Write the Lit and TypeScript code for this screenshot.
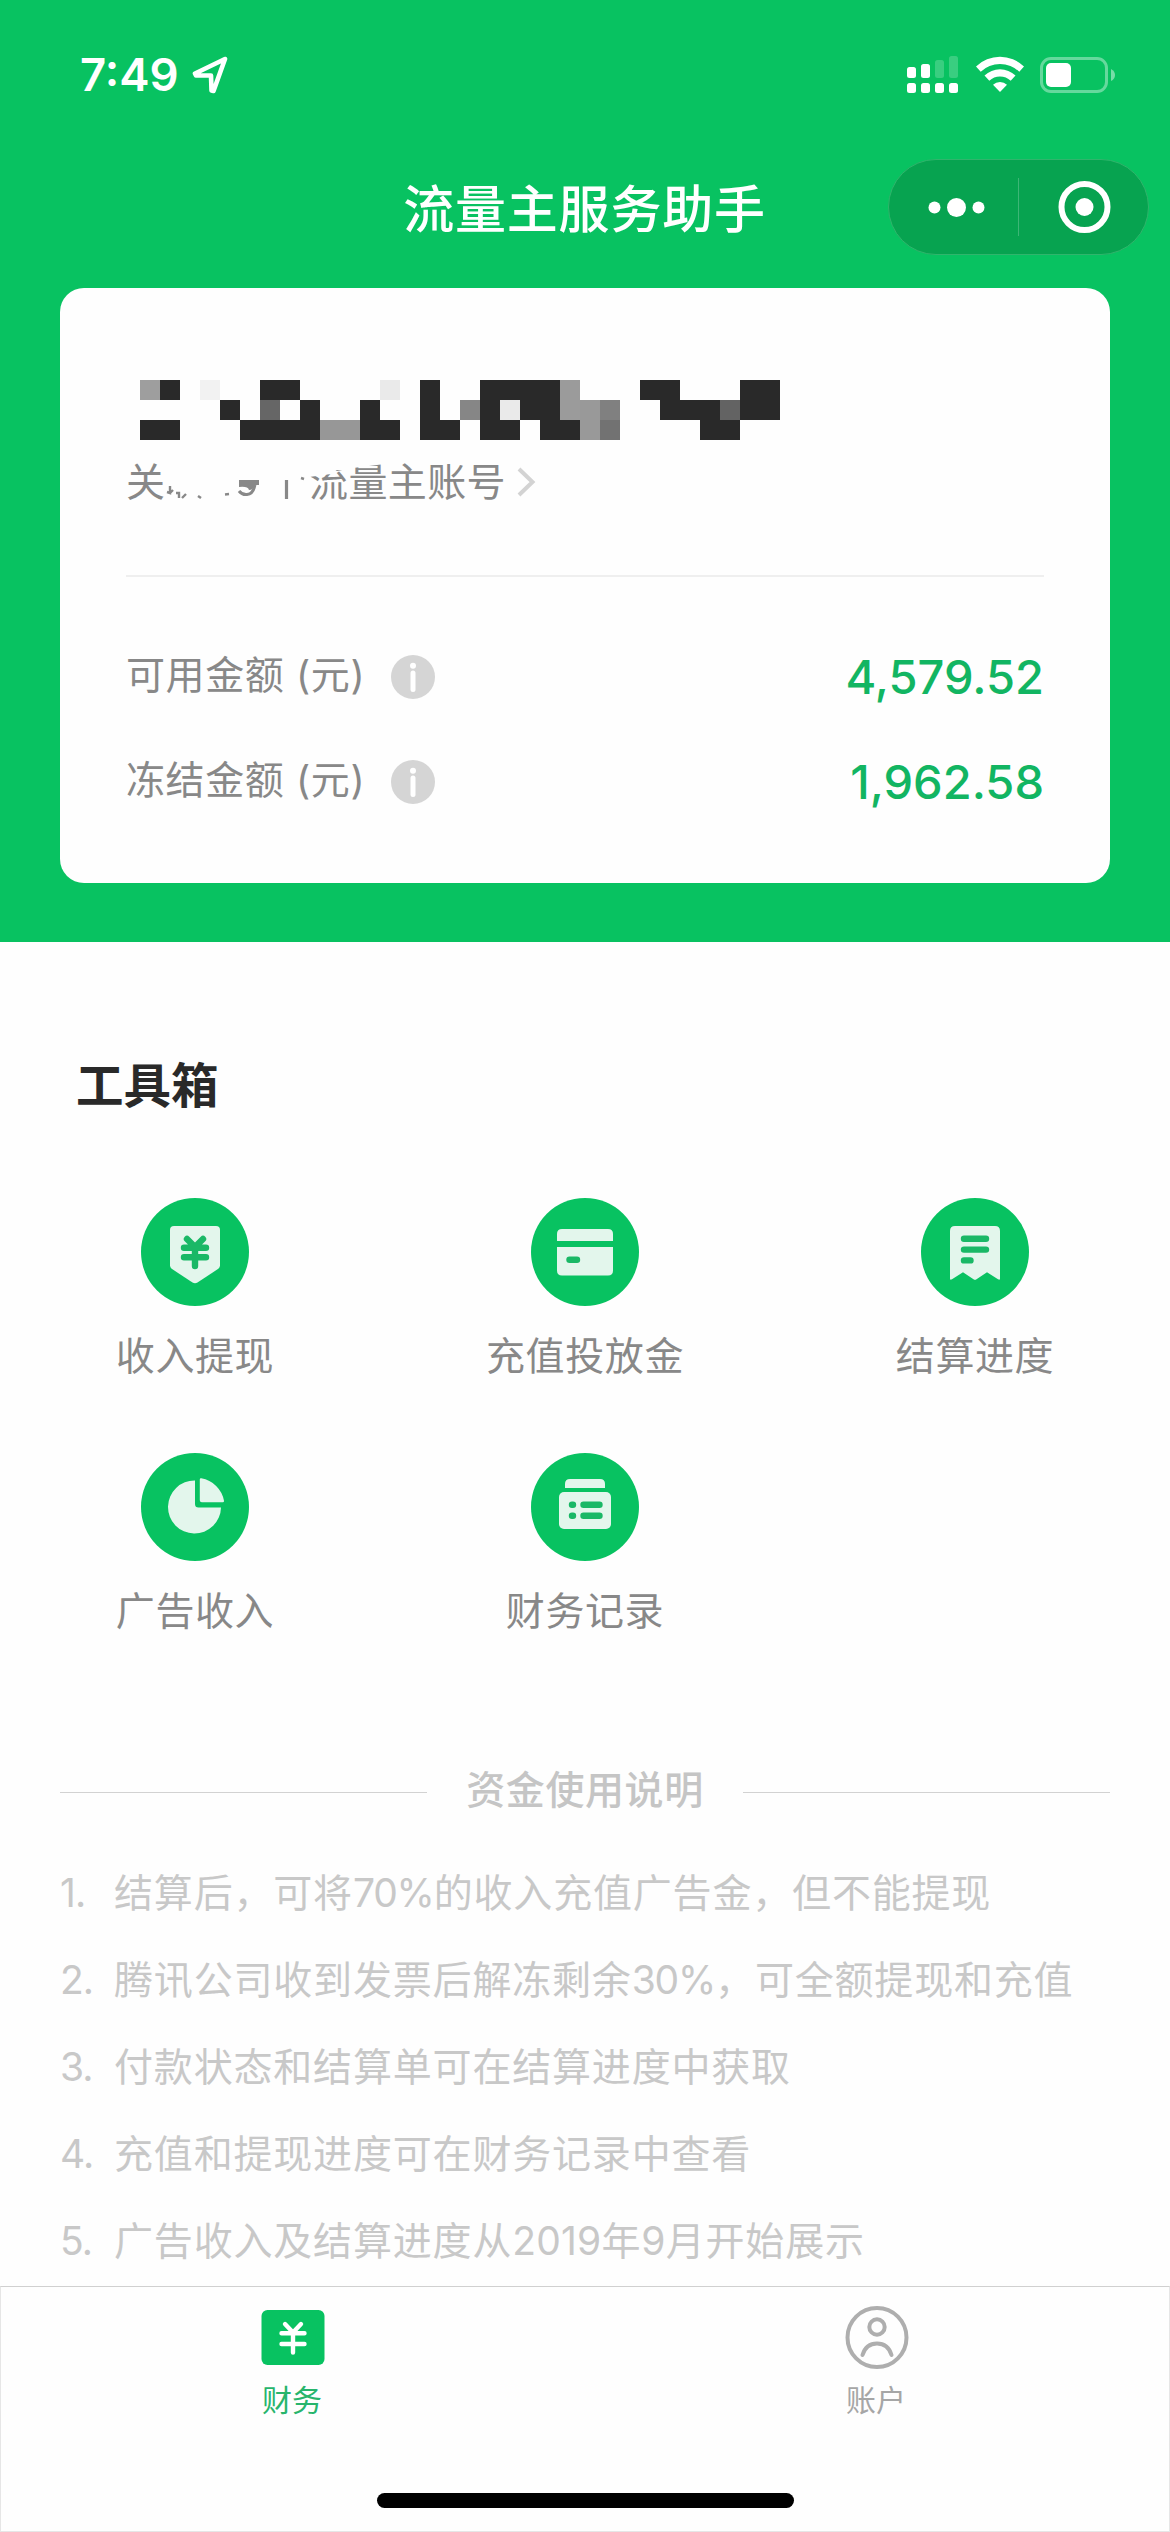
import { LitElement, html, css, svg, type TemplateResult } from "lit";
import { customElement, property } from "lit/decorators.js";

const ICONS: Record<string, TemplateResult> = {
  withdraw: svg`
    <path class="ink" d="M-21-26H21Q25-26 25-22V13.500Q25 15.500 23.300 16.800L2.500 30.500Q0 32 -2.500 30.500L-23.300 16.800Q-25 15.500 -25 13.500V-22Q-25-26 -21-26Z"/>
    <path class="cut" d="M-8-13L0-5L8-13M-11-4.300H11M-11 5.200H11M0-5V14"/>`,
  card: svg`
    <path class="ink" d="M-28-11V-18Q-28-23 -23-23H23Q28-23 28-18V-11Z"/>
    <path class="ink" d="M-28-5H28V18.500Q28 23.500 23 23.500H-23Q-28 23.500 -28 18.500Z"/>
    <path class="cut" d="M-15.500 7.800H-8"/>`,
  receipt: svg`
    <path class="ink" d="M-20-26H20Q25-26 25-21V26.500Q25 28.500 23 27.300L12 20.200L1.500 27.200Q0 28.200 -1.500 27.200L-12 20.200L-23 27.300Q-25 28.500 -25 26.500V-21Q-25-26 -20-26Z"/>
    <path class="cut" d="M-11-13.200H11M-11-2.400H11M-11 8.400H-4.500"/>`,
  pie: svg`
    <path class="ink" d="M0-26.500V-3Q0 .5 3.500 .5H26A26.500 26.500 0 1 1 0-26.500Z"/>
    <path class="ink" d="M4.800-27.500Q4.800-29 6.300-28.700A28 28 0 0 1 29-6.300Q29.200-4.800 27.700-4.800H6.800Q4.800-4.800 4.800-6.800Z"/>`,
  ledger: svg`
    <path class="ink" d="M-20-19V-23Q-20-28 -15-28H15Q20-28 20-23V-19Z"/>
    <rect class="ink" x="-26" y="-15" width="52" height="37" rx="5"/>
    <path class="cut" d="M-13-2.300H-12M-1.500-2.300H14.500M-13 8.700H-12M-1.500 8.700H14.500"/>`,
};

@customElement("tool-item")
class ToolItem extends LitElement {
  @property() icon = "";
  @property() label = "";

  static styles = css`
    :host {
      display: flex;
      flex-direction: column;
      align-items: center;
      height: 255px;
    }
    .disc { width: 108px; height: 108px; display: block; }
    .bg { fill: #08c261; }
    .ink { fill: #e3f6ec; }
    .cut {
      fill: none;
      stroke: #1ab866;
      stroke-width: 6.4;
      stroke-linecap: round;
      stroke-linejoin: round;
    }
    .label {
      margin-top: 21px;
      font-size: 39px;
      line-height: 58px;
      letter-spacing: 0.6px;
      color: #888;
      white-space: nowrap;
    }
  `;

  render() {
    return html`
      <svg class="disc" viewBox="-54 -54 108 108">
        <circle class="bg" r="54" />
        ${ICONS[this.icon]}
      </svg>
      <span class="label">${this.label}</span>
    `;
  }
}

@customElement("amount-row")
class AmountRow extends LitElement {
  @property() label = "";
  @property() value = "";

  static styles = css`
    :host {
      display: flex;
      align-items: center;
      height: 105px;
    }
    .label {
      width: 265px;
      padding-bottom: 3px;
      font-size: 39px;
      line-height: 58px;
      letter-spacing: 0.6px;
      color: #888;
      white-space: nowrap;
    }
    .info { width: 44px; height: 44px; display: block; }
    .value {
      margin-left: auto;
      padding-top: 1px;
      font-size: 47px;
      line-height: 60px;
      font-weight: 500;
      color: #12b562;
    }
  `;

  render() {
    return html`
      <span class="label">${this.label}</span>
      <svg class="info" viewBox="0 0 44 44">
        <circle cx="22" cy="22" r="22" fill="#d5d5d5" />
        <circle cx="22" cy="10.800" r="3" fill="#fff" />
        <path d="M22 18V34.500" stroke="#fff" stroke-width="5" stroke-linecap="round" />
      </svg>
      <span class="value">${this.value}</span>
    `;
  }
}

const DARK = "#292929";

// Runs of 20px cells: [column, row, columns wide, rows tall, colour].
const MOSAIC: [number, number, number, number, string][] = [
  [0, 0, 1, 1, "#9e9e9e"], [1, 0, 1, 1, DARK], [3, 0, 1, 1, "#f2f2f2"],
  [6, 0, 2, 1, DARK], [12, 0, 1, 1, "#eaeaea"], [14, 0, 1, 3, DARK],
  [17, 0, 4, 1, DARK], [21, 0, 1, 2, "#9b9b9b"], [25, 0, 2, 1, DARK],
  [30, 0, 2, 2, DARK],
  [4, 1, 1, 1, DARK], [6, 1, 1, 1, "#666"], [8, 1, 1, 2, DARK],
  [11, 1, 1, 2, DARK], [16, 1, 1, 1, "#868686"], [17, 1, 1, 2, DARK],
  [18, 1, 1, 1, "#eaeaea"], [19, 1, 2, 1, DARK], [22, 1, 1, 2, "#999"],
  [23, 1, 1, 1, "#808080"], [26, 1, 3, 1, DARK], [29, 1, 1, 1, "#636363"],
  [0, 2, 2, 1, DARK], [5, 2, 3, 1, DARK], [9, 2, 2, 1, "#979797"],
  [12, 2, 1, 1, DARK], [15, 2, 1, 1, DARK], [18, 2, 1, 1, DARK],
  [20, 2, 2, 1, DARK], [23, 2, 1, 1, "#727272"], [28, 2, 2, 1, DARK],
];

const TOOLS = [
  ["withdraw", "收入提现"],
  ["card", "充值投放金"],
  ["receipt", "结算进度"],
  ["pie", "广告收入"],
  ["ledger", "财务记录"],
];

const NOTES = [
  "结算后，可将70%的收入充值广告金，但不能提现",
  "腾讯公司收到发票后解冻剩余30%，可全额提现和充值",
  "付款状态和结算单可在结算进度中获取",
  "充值和提现进度可在财务记录中查看",
  "广告收入及结算进度从2019年9月开始展示",
];

@customElement("app-root")
class AppRoot extends LitElement {
  static styles = css`
    :host {
      display: flex;
      flex-direction: column;
      width: 1170px;
      height: 2532px;
      overflow: hidden;
      background: #fefefe;
      font-family: Inter, "Noto Sans CJK SC", sans-serif;
    }
    * { box-sizing: border-box; }
    svg { display: block; flex: none; }

    .hero {
      flex: none;
      height: 942px;
      padding: 0 60px;
      background: #08c261;
    }
    .status {
      display: flex;
      align-items: center;
      height: 150px;
      margin-right: -6px;
      padding-left: 20px;
      color: #fff;
    }
    .time {
      width: 112px;
      font-size: 45.500px;
      line-height: 60px;
      font-weight: 600;
      white-space: nowrap;
    }
    .signal { margin-left: auto; }
    .wifi { margin-left: 17px; }
    .battery { margin-left: 16px; }

    .nav {
      display: grid;
      grid-template-columns: 261px 1fr 261px;
      align-items: center;
      height: 138px;
      margin: 0 -39px 0 -40px;
      padding-bottom: 24px;
    }
    .title {
      grid-column: 2;
      padding-top: 5px;
      text-align: center;
      font-size: 51px;
      line-height: 72px;
      font-weight: 500;
      letter-spacing: 0.8px;
      color: #fff;
    }

    .card {
      height: 595px;
      padding: 92px 66px 0;
      border-radius: 24px;
      background: #fefefe;
    }
    .mosaic { margin-left: 14px; }
    .account {
      display: flex;
      align-items: center;
      height: 58px;
      margin-top: 13px;
      font-size: 39px;
      line-height: 58px;
      letter-spacing: 0.4px;
      color: #888;
      white-space: nowrap;
    }
    .first { width: 40px; }
    .owner { position: relative; width: 200px; }
    .veil { position: absolute; left: 0; top: 0; }
    .more { margin-left: 8px; }
    .rule { height: 2px; margin: 64px 0 47px; background: #efefef; }

    .tools { padding-top: 114px; }
    .heading {
      margin: 0 0 82px 76px;
      font-size: 47.500px;
      line-height: 60px;
      font-weight: 700;
      color: #292929;
    }
    .grid { display: grid; grid-template-columns: repeat(3, 390px); }

    .notes { margin-top: 50px; padding: 0 60px; }
    .caption {
      display: flex;
      align-items: center;
      gap: 39px;
      height: 58px;
      color: #c5c5c5;
      font-size: 39px;
      font-weight: 500;
      letter-spacing: 0.6px;
      white-space: nowrap;
    }
    .line { flex: 1; height: 1px; margin-top: 10px; background: #d2d2d2; }
    .list { margin: 33px 0 0; padding: 0; list-style: none; }
    .note {
      display: flex;
      height: 87px;
      font-size: 39px;
      line-height: 87px;
      letter-spacing: 0.82px;
      color: #c8c8c8;
      white-space: nowrap;
    }
    .num { width: 54px; flex: none; letter-spacing: -1px; }
    .digits { letter-spacing: 0.2px; }
    .percent { letter-spacing: -1.2px; }

    .tabbar {
      flex: none;
      display: grid;
      grid-template-columns: 1fr 1fr;
      grid-template-rows: 1fr auto;
      height: 246px;
      margin-top: auto;
      border: 1px solid #e6e6e6;
      border-top-color: #d0d0d0;
      background: #fefefe;
    }
    .tab {
      display: flex;
      flex-direction: column;
      align-items: center;
      padding-top: 19px;
      font-size: 30px;
      line-height: 44px;
      color: #a6a6a6;
    }
    .tab svg { margin-bottom: 8px; }
    .tab span { margin-right: 2px; }
    .active { color: #27b56c; }
    .home {
      grid-column: 1 / 3;
      justify-self: center;
      width: 417px;
      height: 15px;
      margin-bottom: 23px;
      border-radius: 8px;
      background: #000;
    }
  `;

  private statusBar() {
    return html`
      <div class="status">
        <span class="time">7:49</span>
        <svg width="36" height="38" viewBox="0 0 36 38">
          <path d="M33 3L3 17.500L4 19.500L19 19.500L19.500 34.500L21.500 35Z" fill="none" stroke="#fff"
            stroke-width="4.600" stroke-linejoin="round" />
        </svg>
        <svg class="signal" width="52" height="38" viewBox="0 0 52 38">
          <g fill="#fff">
            <rect x="0" y="11" width="9" height="11" rx="2.500" />
            <rect x="14" y="8" width="9" height="14" rx="2.500" />
            <rect x="28" y="4" width="9" height="18" rx="2.500" opacity=".2" />
            <rect x="42" y="0" width="9" height="22" rx="2.500" opacity=".2" />
            <rect x="0" y="27" width="9" height="10" rx="2.500" />
            <rect x="14" y="27" width="9" height="10" rx="2.500" />
            <rect x="28" y="27" width="9" height="10" rx="2.500" />
            <rect x="42" y="27" width="9" height="10" rx="2.500" />
          </g>
        </svg>
        <svg class="wifi" width="48" height="38" viewBox="0 0 48 38">
          <g fill="#fff">
            <path d="M0 10.500A34.500 34.500 0 0 1 48 10.500L43.300 15.800A28 28 0 0 0 4.700 15.800Z" />
            <path d="M8.500 19.500A22.500 22.500 0 0 1 39.500 19.500L34.700 24.800A15.600 15.600 0 0 0 13.300 24.800Z" />
            <path d="M17 28.700A10.300 10.300 0 0 1 31 28.700L24 36Z" />
          </g>
        </svg>
        <svg class="battery" width="76" height="38" viewBox="0 0 76 38">
          <rect x="1.500" y="2.500" width="65" height="33" rx="9.500" fill="none" stroke="#fff" stroke-width="3" opacity=".38" />
          <rect x="6" y="7" width="25" height="24" rx="5" fill="#fff" />
          <path d="M71 13Q75 15 75 19T71 25Z" fill="#fff" opacity=".45" />
        </svg>
      </div>
    `;
  }

  private navBar() {
    return html`
      <div class="nav">
        <span class="title">流量主服务助手</span>
        <svg width="261" height="96" viewBox="0 0 261 96">
          <rect x=".5" y=".5" width="260" height="95" rx="47.500" fill="#07a350" stroke="#30b56c" />
          <path d="M130.500 19V77" stroke="#3db676" />
          <g fill="#fff">
            <circle cx="46.500" cy="48.500" r="6" />
            <circle cx="68.500" cy="48.500" r="9.500" />
            <circle cx="90.500" cy="48.500" r="6" />
            <circle cx="196.500" cy="48" r="9" />
          </g>
          <circle cx="196.500" cy="48" r="23" fill="none" stroke="#fff" stroke-width="6" />
        </svg>
      </div>
    `;
  }

  private accountCard() {
    return html`
      <div class="card">
        <svg class="mosaic" width="640" height="60" viewBox="0 0 32 3" shape-rendering="crispEdges">
          ${MOSAIC.map(([x, y, w, h, c]) => svg`<rect x=${x} y=${y} width=${w} height=${h} fill=${c} />`)}
        </svg>
        <div class="account">
          <span class="first">关</span>
          <svg width="143" height="58" viewBox="0 0 143 58">
            <g fill="none" stroke="#888" stroke-width="2.400">
              <path d="M4 33V40L1 39M4 40L7 37M10 40H13V45M16 45L20 41" />
              <path d="M32 43L35 45" />
              <path d="M59 41.500L63 41" />
              <path d="M73 38Q76 42 81 41.500Q87 41 89 32" stroke-width="3" />
              <path d="M120.500 27V46" stroke-width="3.200" />
              <path d="M135 25L138 26" />
            </g>
            <path d="M73 27H93V32H89Q87 37 83 37Q82 33 73 34Z" fill="#888" />
          </svg>
          <span class="owner">流量主账号
            <svg class="veil" width="80" height="58" viewBox="0 0 80 58">
              <path d="M0 0H80V10L68 12L44 15V20L28 17L22 21L0 24Z" fill="#fefefe" />
            </svg>
          </span>
          <svg class="more" width="20" height="32" viewBox="0 0 20 32">
            <path d="M2 3L15.500 16L2 29" fill="none" stroke="#d3d3d3" stroke-width="4" />
          </svg>
        </div>
        <div class="rule"></div>
        <amount-row label="可用金额 (元)" value="4,579.52"></amount-row>
        <amount-row label="冻结金额 (元)" value="1,962.58"></amount-row>
      </div>
    `;
  }

  private note(text: string) {
    return text
      .split(/(\d+%?)/)
      .filter((part) => part)
      .map((part) =>
        /^\d/.test(part)
          ? html`<span class=${part.endsWith("%") ? "percent" : "digits"}>${part}</span>`
          : part,
      );
  }

  private tabBar() {
    return html`
      <div class="tabbar">
        <div class="tab active">
          <svg width="64" height="64" viewBox="0 0 64 64">
            <rect x="0.500" y="4" width="63" height="55" rx="6" fill="#08c261" />
            <path d="M24 18L32 26.500L40 18M20.500 27.300H43.500M20.500 38H43.500M32 27V46.500" fill="none" stroke="#fff"
              stroke-width="4.400" stroke-linecap="round" stroke-linejoin="round" />
          </svg>
          <span>财务</span>
        </div>
        <div class="tab">
          <svg width="64" height="64" viewBox="0 0 64 64">
            <g fill="none" stroke="#aeaeae" stroke-width="4" stroke-linecap="round">
              <circle cx="32" cy="31.500" r="29.500" />
              <circle cx="32" cy="21" r="7.700" />
              <path d="M17.500 49Q21 37.500 32 37.500T46.500 49" />
            </g>
          </svg>
          <span>账户</span>
        </div>
        <div class="home"></div>
      </div>
    `;
  }

  render() {
    return html`
      <div class="hero">${this.statusBar()} ${this.navBar()} ${this.accountCard()}</div>
      <div class="tools">
        <div class="heading">工具箱</div>
        <div class="grid">
          ${TOOLS.map(([icon, label]) => html`<tool-item icon=${icon} label=${label}></tool-item>`)}
        </div>
      </div>
      <div class="notes">
        <div class="caption">
          <span class="line"></span>
          <span>资金使用说明</span>
          <span class="line"></span>
        </div>
        <ol class="list">
          ${NOTES.map((text, i) => html`<li class="note"><span class="num">${i + 1}.</span><span>${this.note(text)}</span></li>`)}
        </ol>
      </div>
      ${this.tabBar()}
    `;
  }
}
